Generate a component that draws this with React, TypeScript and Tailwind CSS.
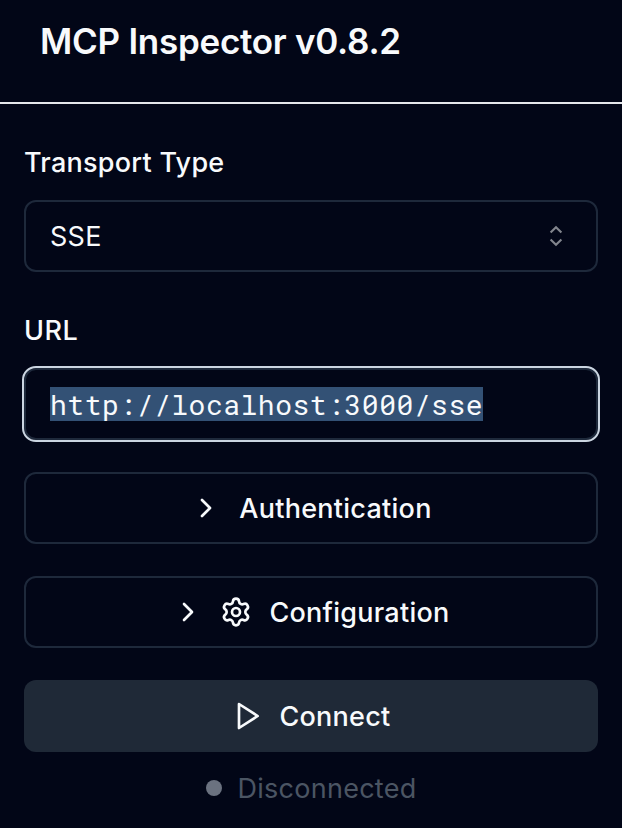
import React from 'react';
import { ChevronRight, Settings } from 'lucide-react';

const outline = 'flex h-[72px] w-full items-center justify-center rounded-xl border-2 border-[#1e293b]';

function SortCarets() {
  return (
    <svg width="32" height="32" viewBox="0 0 32 32" fill="none" stroke="#82858d" strokeWidth="2.1" strokeLinejoin="miter">
      <path d="M10.6 12.6 16 7.2l5.4 5.4M10.6 19.4l5.4 5.4 5.4-5.4" />
    </svg>
  );
}

function PlayOutline() {
  return (
    <svg className="mr-4" width="32" height="32" viewBox="0 0 24 24" fill="none" stroke="currentColor" strokeWidth="2" strokeLinecap="round" strokeLinejoin="round">
      <polygon points="6 3 20 12 6 21 6 3" />
    </svg>
  );
}

export default function App() {
  return (
    <div className="h-[828px] w-[622px] overflow-hidden bg-[#020617] font-['Inter',sans-serif] text-[27px] leading-[40px] font-medium tracking-[0.26px] text-[#f8fafc]">
      <header className="flex h-[104px] items-start border-b-2 border-[#e5e7eb] pt-[13px] pl-10">
        <h1 className="text-[35px] leading-[56px] font-semibold tracking-[-0.27px] whitespace-nowrap">MCP Inspector v0.8.2</h1>
      </header>
      <main className="px-6 pt-[39px]">
        <label className="block">Transport Type</label>
        <button className="mt-[17px] flex h-[72px] w-full items-center justify-between rounded-xl border-2 border-[#1e293b] pr-6 pl-6 font-normal">
          <span className="pt-px">SSE</span>
          <SortCarets />
        </button>
        <label className="mt-[39px] block tracking-[0.5px]">URL</label>
        <div className="-mx-[2px] mt-[15px] flex h-[76px] items-center rounded-[14px] border-2 border-[#cbd5e1] pl-[26px] font-['Roboto_Mono','DejaVu_Sans_Mono',monospace] text-[28px] font-normal tracking-[0.52px] inset-ring-2 inset-ring-[#1e293b]">
          <span className="h-[34px] bg-[#335175] pt-px leading-[34px]">http://localhost:3000/sse</span>
        </div>
        <button className={outline + ' mt-[30px]'}>
          <ChevronRight size={32} strokeWidth={2} className="mr-[17px]" />
          <span className="pt-px">Authentication</span>
        </button>
        <button className={outline + ' mt-8'}>
          <ChevronRight size={32} strokeWidth={2} className="mr-4" />
          <Settings size={32} strokeWidth={2} className="mr-[17px]" />
          <span className="pt-px">Configuration</span>
        </button>
        <button className="mt-8 flex h-[72px] w-full items-center justify-center rounded-xl bg-[#1f2937]">
          <PlayOutline />
          <span className="pt-px">Connect</span>
        </button>
        <div className="mt-4 flex h-10 items-center justify-center font-normal text-[#4b5563]">
          <span className="mr-4 size-4 rounded-full bg-[#6b7280]" />
          <span className="pt-px">Disconnected</span>
        </div>
      </main>
    </div>
  );
}
